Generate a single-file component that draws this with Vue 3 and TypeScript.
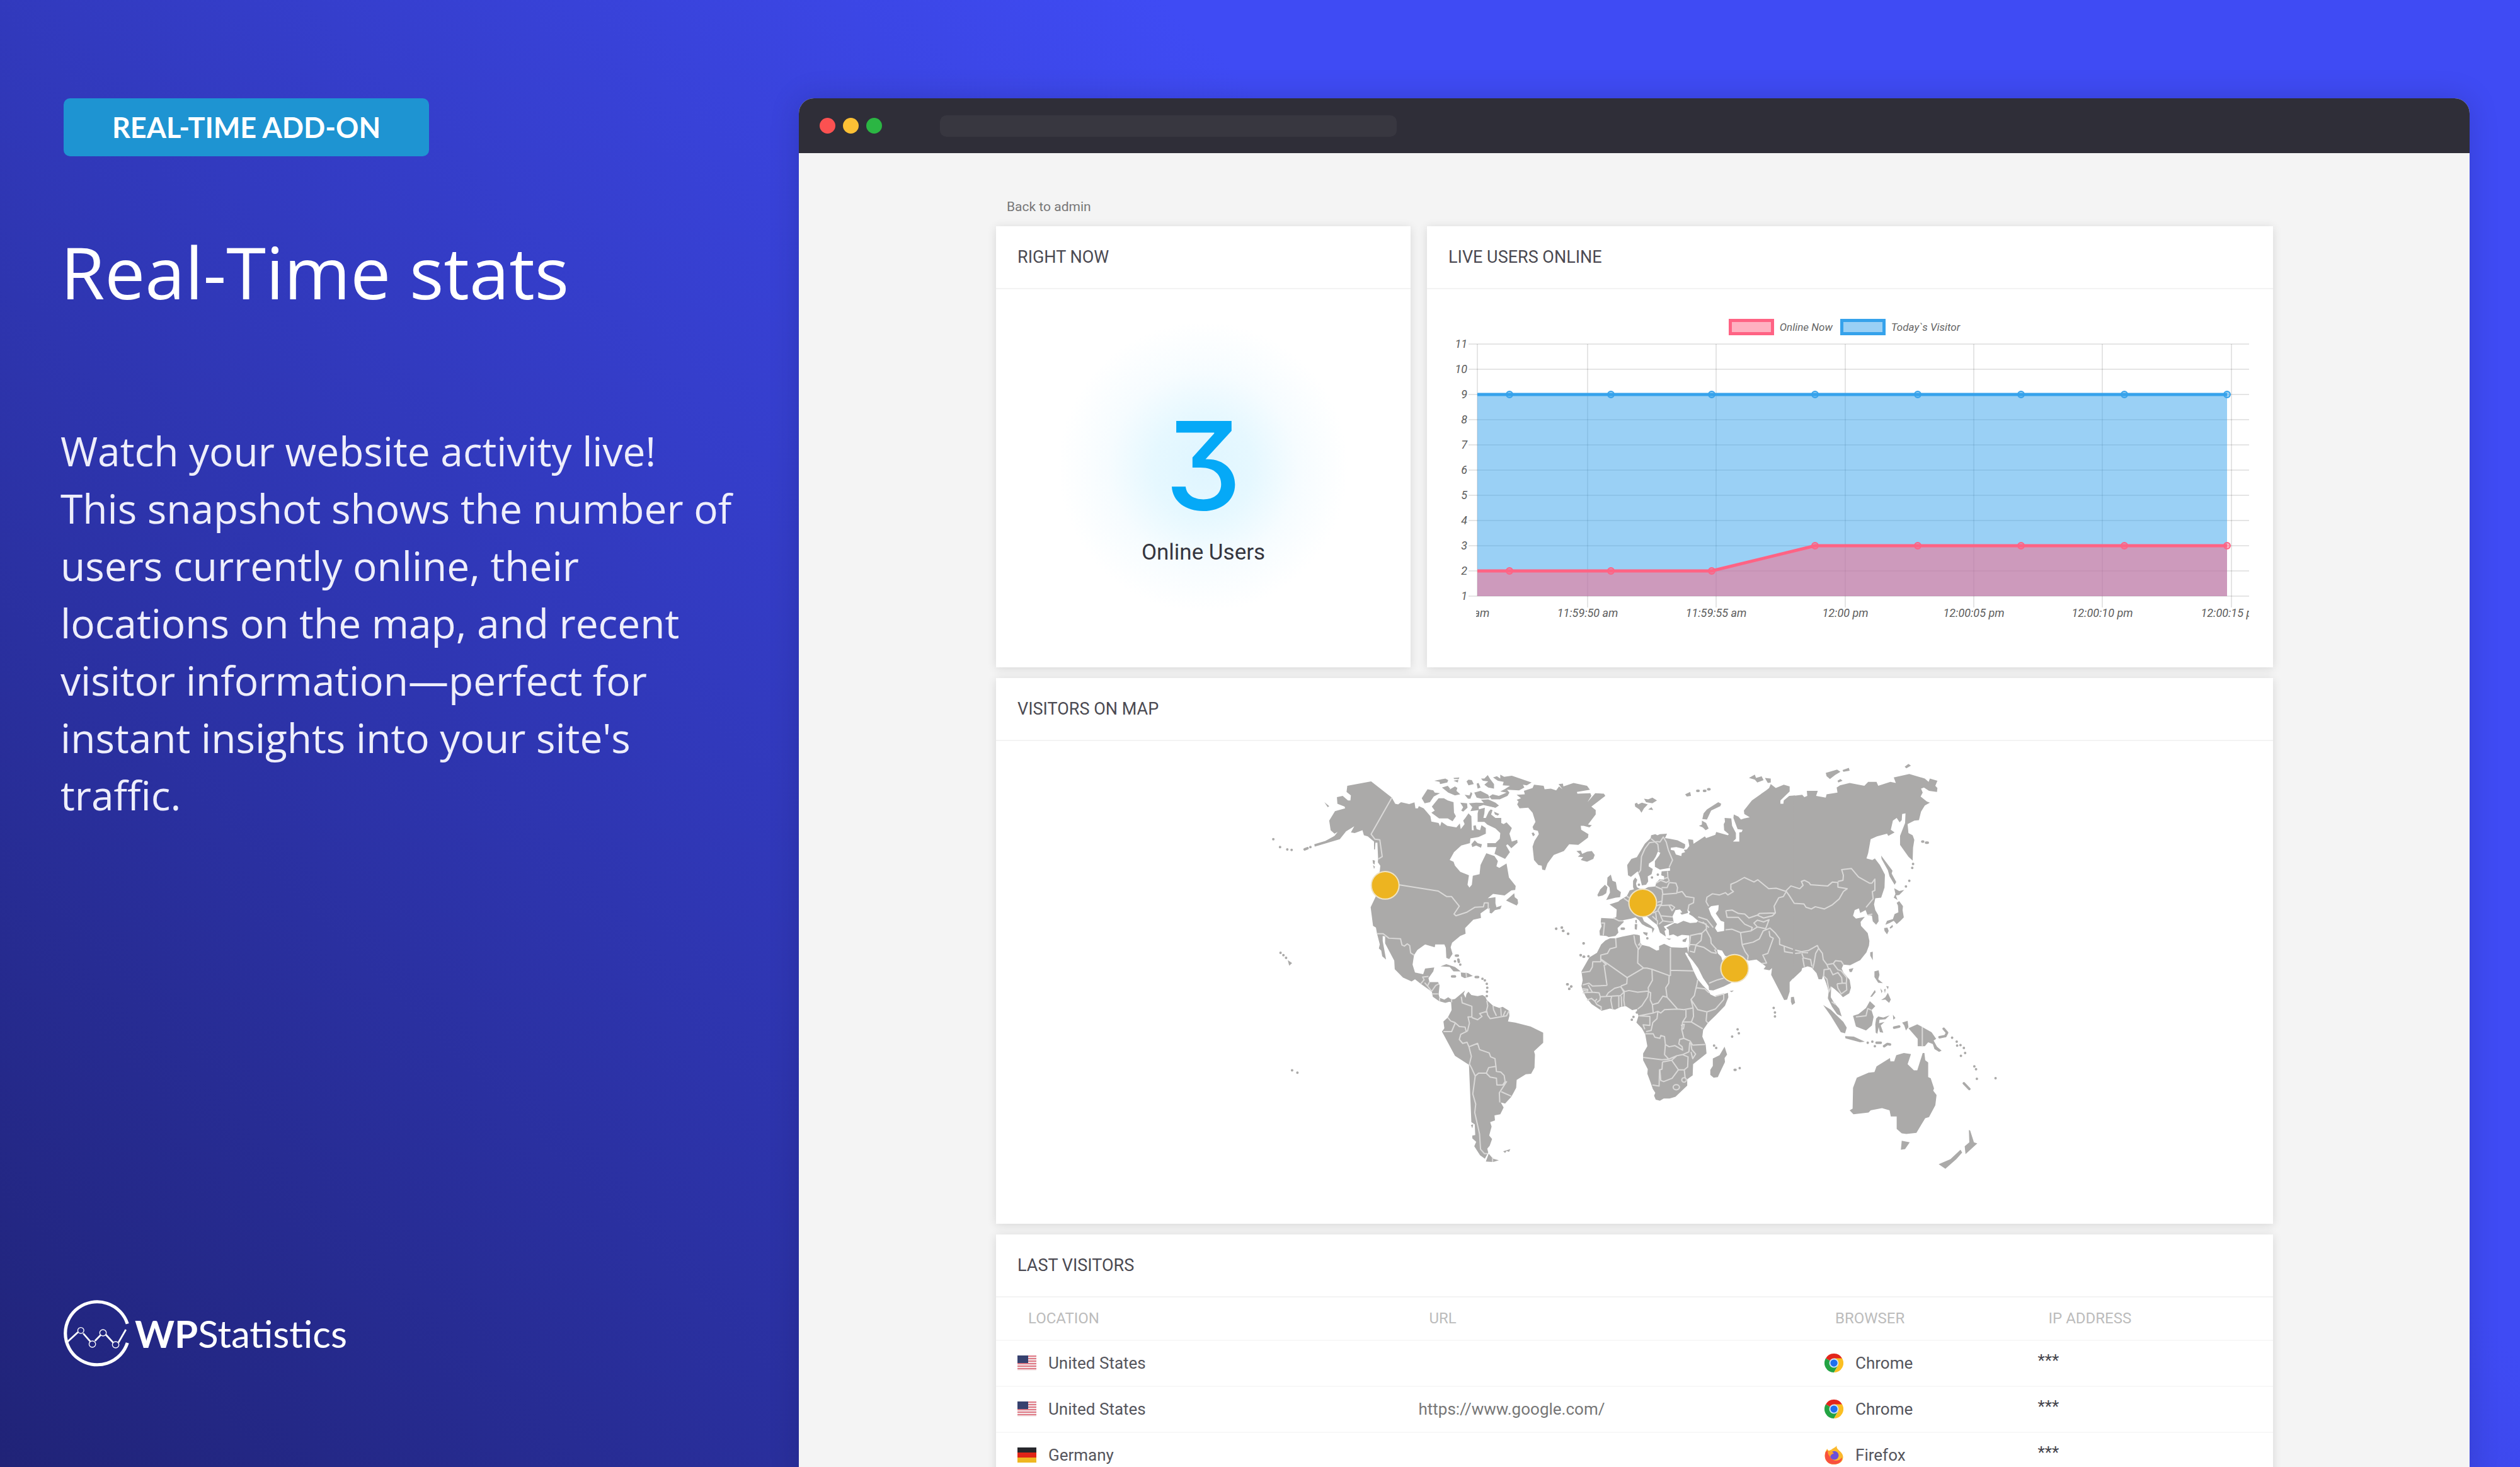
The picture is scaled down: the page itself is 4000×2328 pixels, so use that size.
<script setup lang="ts">
interface Visitor {
  flag: 'us' | 'de'
  country: string
  url: string
  browser: 'Chrome' | 'Firefox'
  ip: string
}

const visitors: Visitor[] = [
  { flag: 'us', country: 'United States', url: '', browser: 'Chrome', ip: '***' },
  { flag: 'us', country: 'United States', url: 'https://www.google.com/', browser: 'Chrome', ip: '***' },
  { flag: 'de', country: 'Germany', url: '', browser: 'Firefox', ip: '***' },
]

/* Live chart, drawn in its own units: 40 per user on the y axis */
const plotLeft = 80
const plotRight = 1305
const plotTop = 14
const plotBottom = 414
const yOf = (n: number): number => plotBottom - (n - 1) * 40
const yTicks: number[] = [11, 10, 9, 8, 7, 6, 5, 4, 3, 2, 1]
const xTicks: { x: number; label: string }[] = [
  { x: 51, label: '11:59:45 am' },
  { x: 255, label: '11:59:50 am' },
  { x: 459, label: '11:59:55 am' },
  { x: 664, label: '12:00 pm' },
  { x: 868, label: '12:00:05 pm' },
  { x: 1072, label: '12:00:10 pm' },
  { x: 1277, label: '12:00:15 pm' },
]
const sampleX: number[] = [131, 292, 452, 616, 779, 943, 1107, 1270]
const today: number[] = [9, 9, 9, 9, 9, 9, 9, 9]
const online: number[] = [2, 2, 2, 3, 3, 3, 3, 3]

const linePath = (values: number[]): string =>
  `M${plotLeft} ${yOf(values[0])}` + values.map((v, i) => `L${sampleX[i]} ${yOf(v)}`).join('')
const areaPath = (values: number[]): string =>
  `${linePath(values)}L${sampleX[sampleX.length - 1]} ${plotBottom}L${plotLeft} ${plotBottom}Z`

const series = [
  { name: 'today', values: today },
  { name: 'online', values: online },
]

/* World map, kept as three sheets */
const americasLand = [
  'M415 148L514 132L600 190L614 212L626 214L638 206L672 213L694 207L698 228L708 228L712 220L732 228L760 256L764 275L794 280L800 292L806 276L830 290L868 296L882 282L886 302L902 284L896 272L905 262L918 246L930 256L932 306L940 306L938 290L948 288L952 302L966 306L972 288L990 298L990 318L960 330L926 335L924 352L888 360L858 384L840 412L856 418L862 432L884 454L920 466L914 500L922 510L932 500L936 468L964 462L968 430L992 388L1026 398L1040 416L1034 434L1046 440L1076 424L1086 474L1114 504L1112 518L1096 520L1068 538L1020 532L998 548L1030 544L1030 566L1034 580L1056 574L1050 586L1028 590L1014 602L1006 600L1006 584L1000 582L968 602L970 618L938 624L904 654L906 674L884 682L850 706L844 722L852 746L838 764L826 760L824 724L818 712L780 712L778 722L738 712L706 732L692 750L686 784L696 812L730 818L738 798L776 794L772 808L752 832L756 846L792 846L798 858L794 890L798 902L818 908L834 900L848 908L862 906L904 876L898 888L906 902L910 888L918 880L930 892L956 896L976 892L988 898L994 910L1020 930L1046 938L1060 934L1086 948L1088 966L1082 986L1112 990L1176 1004L1228 1026L1228 1062L1190 1092L1194 1104L1192 1150L1178 1172L1156 1174L1118 1194L1116 1222L1096 1254L1070 1278L1052 1274L1064 1292L1050 1316L1026 1320L1028 1338L1008 1344L1014 1360L1004 1392L1016 1404L1006 1428L996 1438L1000 1452L986 1474L966 1462L942 1430L950 1414L934 1402L934 1392L946 1390L944 1352L930 1344L920 1140L862 1108L808 1022L818 1010L814 986L832 972L848 946L846 918L838 916L822 920L796 914L770 898L766 880L720 852L696 836L682 844L646 830L612 800L610 770L572 708L572 684L562 682L562 700L576 766L560 754L556 734L546 726L550 712L538 672L534 652L522 646L512 580L534 540L552 490L544 470L550 450L552 432L542 420L543 408L540 350L532 350L530 374L526 374L526 346L500 328L484 324L478 306L446 316L430 314L444 292L410 310L384 338L280 364L278 356L324 344L362 326L375 312L362 318L346 306L340 272L364 238L406 228L404 222L374 212L372 188L396 184L418 200L428 200L430 182L412 170Z',
  'M1002 1456L1020 1474L1044 1480L1020 1486L990 1484Z',
  'M1118 180L1152 178L1148 166L1184 156L1190 144L1230 148L1234 160L1260 158L1282 164L1294 150L1308 160L1292 142L1310 140L1312 150L1354 138L1410 148L1422 162L1368 170L1370 176L1424 174L1428 184L1412 206L1444 174L1480 176L1486 184L1428 222L1446 234L1446 250L1414 286L1430 288L1420 296L1396 290L1384 290L1386 304L1416 320L1414 332L1374 358L1336 356L1314 380L1272 394L1246 424L1236 448L1224 446L1222 432L1208 430L1190 412L1184 364L1192 344L1210 320L1206 308L1188 304L1184 294L1196 276L1184 244L1166 226L1130 228L1120 214L1126 204L1118 198L1136 192Z',
  'M1366 380L1384 378L1390 390L1410 382L1430 380L1442 394L1436 408L1410 418L1384 412L1394 402L1372 400L1382 392Z',
  'M766 222L794 192L816 192L832 200L856 206L858 244L866 256L852 274L832 264L796 264L764 244L778 236Z',
  'M724 192L748 160L772 164L778 172L800 174L774 186L758 206L736 210Z',
  'M956 246L960 232L986 226L984 246L980 262L990 262L1002 240L1010 232L1018 234L1012 250L1030 262L1054 262L1054 280L1064 284L1076 278L1098 298L1088 318L1098 346L1120 340L1122 350L1096 370L1080 356L1074 360L1090 384L1070 408L1026 390L1034 366L996 366L996 352L1030 352L1048 336L1050 316L1030 300L996 286L984 276L956 276Z',
  'M1020 118L1036 114L1050 122L1050 108L1066 116L1098 112L1180 136L1160 146L1144 144L1150 154L1128 164L1078 162L1088 172L1080 184L1048 196L1014 196L1004 186L1018 178L1044 184L1076 172L1050 168L1068 160L1090 148L1060 146L1064 134L1040 130Z',
  'M970 122L984 122L998 110L1008 124L1024 142L1024 158L1000 154L984 144L1000 132L978 130Z',
  'M776 130L822 122L834 128L830 136L800 142L798 134Z',
  'M856 120L880 118L878 124L858 124ZM856 130L876 126L874 136Z',
  'M910 132L918 126L932 128L940 142L918 146Z',
  'M808 154L832 148L842 158L838 162L862 150L872 156L868 166L884 178L862 182L834 172Z',
  'M952 140L960 138L968 154L956 158Z',
  'M902 180L922 182L928 170L934 176L926 194L916 194Z',
  'M942 172L968 166L1000 180L1006 192L972 194L952 190Z',
  'M970 198L1000 196L1030 208L1044 218L1030 226L990 216Z',
  'M884 208L912 210L914 226L896 240L888 236L896 224Z',
  'M920 210L950 208L1030 210L1044 218L1030 226L980 216L960 222L962 234L926 238L934 224Z',
  'M930 356L944 342L956 352L974 356L970 368L950 360L934 366Z',
  'M1024 240L1046 248L1040 254L1028 250Z',
  'M1074 556L1108 530L1110 544L1122 552L1124 566L1118 574Z',
  'M802 790L826 782L862 792L886 808L856 808L840 792Z',
  'M886 812L916 814L936 824L902 832L888 826Z',
  'M1180 316L1188 314L1194 322L1186 328Z',
  'M320 206L340 220L334 224Z',
  'M168 768L186 778L174 788Z',
  'M520 412L530 414L528 428L522 424ZM522 430L530 436L526 444Z',
  'M1062 1448L1092 1440L1086 1450L1076 1446L1070 1454Z',
  'M928 1354L938 1352L934 1366Z',
]
const americasBorders =
  'M600 190L514 320L530 338L550 340L560 400L544 408M546 462L570 480L574 496L628 500L792 522L828 542L848 542L880 576L858 604L866 610L910 598L944 580L980 578L984 564L1000 564L1000 584L1006 586M538 674L564 674L588 690L636 692L642 714L652 718L664 710L674 716L678 742L692 750M720 852L734 838L728 828L752 826M736 848L750 862L766 880M756 846L748 860M796 852L782 858L766 878M766 888L792 888M798 902L798 914M848 906L848 918M888 898L892 920L932 932L932 970L916 970L922 992L914 1020M832 972L844 984L862 990L880 1004L904 1006L908 1020M864 990L848 1022L814 1022M932 972L956 980L974 968L964 958L994 950L998 964L1008 976L1076 966L1086 948M994 912L998 930L992 950M1020 930L1022 944L1034 966M1052 938L1054 966M1072 948L1062 966M914 1020L886 1032L880 1050L894 1064L912 1060L920 1076L956 1064L964 1086L1004 1098L1010 1112L1028 1118L1032 1146L1002 1150L992 1170L960 1170L946 1180L930 1150L922 1138L930 1110L920 1076M992 1170L1008 1184L1034 1188L1036 1212L1060 1212L1070 1200L1066 1178L1052 1166L1034 1164L1032 1146M946 1180L936 1244L948 1280L944 1310L964 1386L968 1440L984 1456L998 1456M1060 1212L1076 1200L1046 1240L1048 1274M1054 1236L1096 1252M908 812L910 830M1018 1470L1018 1486'
const americasDots =
  'M108 338h0M136 366h0M166 374h0M184 376h0M238 374L250 370M262 366h0M138 742h0M150 750h0M161 760h0M186 1160h0M208 1168h0M866 752h8M876 766L878 774M884 784h0M862 772h0M850 826h12M948 828h10M976 834h0M986 840h0M994 852h0M996 866h0M995 880h0M994 896h0M1282 656h0M1306 652h0M1312 664h0M1332 674h0M1396 708h0M1384 750h0M1398 756h0M1416 754h0M1330 854h0M1344 862h0M1336 870h0'

const westLand = [
  'M276 712L296 698L318 690L345 690L378 684L432 676L450 678L460 680L462 706L470 714L506 720L540 734L552 732L552 718L576 710L610 722L664 724L686 722L692 748L680 740L676 744L700 776L716 806L734 834L760 858L788 878L796 890L820 898L880 884L882 900L866 930L822 964L786 990L762 1016L758 1040L774 1068L778 1100L748 1118L714 1138L712 1178L686 1192L686 1214L630 1254L602 1260L574 1260L556 1268L536 1264L528 1250L534 1240L522 1226L512 1204L496 1172L498 1156L476 1124L476 1100L496 1074L486 1032L470 1010L444 990L454 966L446 950L448 942L424 946L394 932L370 934L342 944L318 940L278 948L230 924L204 900L188 874L182 860L188 840L182 808L220 758L256 742Z',
  'M864 1076L876 1104L864 1116L866 1130L838 1174L832 1184L812 1186L796 1176L796 1158L808 1144L808 1118L840 1106Z',
  'M1201 182L1172 184L1146 200L1144 212L1130 212L1130 200L1174 168L1174 150L1146 144L1108 156L1084 142L1076 156L1062 164L994 200L956 236L958 248L984 260L958 264L942 268L930 258L908 250L906 262L926 302L950 304L946 312L934 314L934 346L904 346L918 336L918 316L900 290L896 264L864 262L866 276L860 284L862 306L884 320L880 324L824 312L820 322L776 334L770 328L716 354L714 340L690 338L696 362L684 374L670 376L676 384L660 388L658 398L632 392L624 378L608 376L608 368L634 366L670 372L676 366L676 356L640 342L602 336L580 334L590 318L556 320L544 324L534 320L514 324L512 334L484 354L446 402L420 408L400 430L404 466L418 472L450 452L460 472L470 502L490 500L500 488L498 470L516 462L522 444L502 434L504 424L524 414L536 400L546 382L558 386L552 396L532 416L532 436L556 446L604 440L604 450L564 452L562 466L576 470L576 482L554 480L538 494L534 506L500 508L480 516L458 514L446 508L442 496L448 482L438 474L428 486L428 508L432 516L412 520L398 540L366 554L358 560L316 570L350 588L348 614L334 620L276 618L274 632L278 648L268 664L270 680L300 682L312 686L344 682L358 670L354 654L384 632L380 626L420 620L440 616L456 626L470 640L490 648L518 656L520 672L530 656L510 644L480 630L470 612L490 610L520 630L542 642L548 652L556 670L584 684L578 664L586 660L574 648L600 640L622 634L616 612L630 590L652 588L662 598L652 600L660 606L690 600L686 588L700 596L694 604L712 612L738 628L730 634L700 636L668 628L640 638L626 636L600 646L586 652L598 660L600 680L620 676L640 684L660 678L696 680L694 720L690 750L712 770L738 796L762 832L788 860L790 874L810 876L860 862L892 850L930 830L960 800L940 784L920 772L880 776L856 776L848 756L832 744L828 730L852 734L866 752L900 762L950 762L980 770L1016 766L1060 790L1050 800L1078 804L1090 796L1086 820L1148 910L1162 908L1174 880L1174 846L1201 824Z',
  'M322 464L306 474L304 500L316 510L318 528L300 554L345 546L366 544L370 526L352 516L346 490L330 486Z',
  'M258 536L272 516L294 500L306 508L300 530L284 538L262 542Z',
  'M476 668L498 670L494 682L478 674ZM436 640L448 640L446 660L436 658ZM438 626L446 624L446 636L440 636ZM586 690L610 692L600 696ZM664 696L686 688L678 704L664 702Z',
  'M436 212L446 208L452 214L470 208L498 214L480 228L468 244L458 232L438 222ZM480 194L500 196L520 190L542 200L520 210L490 206ZM500 232L516 224L524 234Z',
  'M758 266L764 246L780 232L834 206L848 212L844 220L800 236L780 268ZM742 290L756 286L756 272L776 280L788 300L774 306L760 296Z',
  'M676 178L700 170L704 184L684 186Z',
  'M980 120L1008 108L1014 120L1040 114L1050 128L1020 136L1008 126ZM1056 120L1084 122L1084 136L1070 138Z',
  'M888 878L908 876L898 882Z',
]
const westBorders =
  'M345 690L348 722L318 728L306 744L274 750L274 774L236 774L234 792L222 808L184 812M274 764L400 830L398 852L370 860M304 858L234 860L218 850L188 856M274 766L300 784L290 786L304 858M432 680L438 708L452 728L450 778L478 796L400 830M462 706L454 714L468 714L454 730M478 796L494 796L516 800L604 824M606 724L606 824M606 804L716 806M518 800L520 840L500 866L502 878M600 824L598 850L584 866L590 900L602 910L640 942M370 864L388 880L408 876L450 882L500 878M386 882L384 910L388 932M372 896L374 934M360 896L360 936M326 896L322 910L330 942M300 896L310 884L340 868L370 862L384 882L368 894L326 896M186 870L212 872L212 878L188 876M188 884L234 882L266 884L272 898L270 910L256 918M234 882L214 856M272 898L326 896M208 910L230 904L246 914L256 926L276 934L276 946M246 914L256 906M502 878L498 898L470 930L450 942M502 880L512 884L510 910L520 926L524 956L456 966M520 926L548 920L570 896L590 900M524 956L546 950L560 956L578 944L640 942M730 860L720 894L704 908L714 938L670 944L640 942M730 866L770 870L790 884M736 838L730 862M704 908L736 944L780 952L820 942L860 908L860 888L820 896M780 952L776 984L786 992M714 938L716 968L706 988L760 1012M680 946L680 970L664 988L706 988M546 952L542 976L522 990L514 1018L490 1022M456 966L508 968L508 1000L476 998L484 1014M486 1030L524 1030L532 1042L556 1046L560 1036L578 1040L582 1068L600 1076L628 1072L664 1088L662 1076L646 1066L650 1050L670 1046L660 1014L664 988M656 1000L672 996L668 1012L658 1014M670 1046L700 1056L712 1070L772 1068M582 1068L578 1104L598 1120L566 1122L476 1114M598 1120L636 1108L664 1104L694 1094L698 1060M702 1058L708 1086L726 1102L712 1118L704 1094M568 1130L566 1156L554 1158L552 1216L520 1212M568 1130L612 1124L644 1158L614 1188L574 1200L560 1196L556 1160M612 1124L636 1108M664 1104L690 1112L688 1148L672 1158L644 1158M672 1158L676 1186M452 460L464 448L468 400L484 372L506 350L544 346M514 336L546 356L550 382M544 346L556 348L572 330L586 348L596 376L616 412L600 438M592 452L594 474L576 478M538 494L560 484L586 492L600 486L594 474M600 492L632 494L640 510L636 530L570 534L566 516L536 506M564 510L590 510L600 492M568 534L566 558L545 562M566 560L562 574L610 572L626 580L614 592L600 574M640 528L662 524L680 542L718 546L716 564L694 572L690 590M276 636L292 636L286 680M334 618L360 628L382 628M384 548L408 560M398 540L408 546M524 600L548 592L560 610L616 614M540 574L562 570L546 590M520 612L540 626L536 600M560 612L570 628L552 640M568 628L604 632L622 632M544 626L544 642M738 630L776 640L778 656L756 672L702 680L696 720M776 660L798 690L800 708L826 730M756 674L752 698L728 714L698 712M730 716L764 722L800 740L826 744M698 736L720 740L728 714M738 614L780 624L810 652M760 632L790 652M816 730L826 742M790 850L830 838L860 832M788 576L776 560L780 544L806 532L840 536L868 528L880 536L906 524L894 516L894 498L920 490L958 474L1004 490L1022 482L1074 514L1110 512L1158 524L1144 542L1122 546L1100 576L1106 600L1030 602L1020 608M870 592L900 590L930 602L960 604L980 618L1020 608L1050 618L1092 610L1106 600M868 660L900 658L940 670L990 664L996 652L960 640L930 616L876 616L870 592M940 670L948 714L962 738L976 752L974 766M950 712L1000 704L1030 692L1048 664L1080 654L1106 672L1126 692L1126 712L1148 718L1200 732M1080 684L1096 690L1070 744L1046 750L1064 778L1040 780M1080 684L1076 664M990 664L1020 650L1004 636L1020 626L1050 632L1076 624L1060 656L1020 650M1148 720L1150 738L1200 744'
const westDots =
  'M62 656h0M88 652h0M94 664h0M118 674h0M192 708h0M178 750h0M192 756h0M114 854h0M134 862h0M124 870h0M734 166h6M766 166h6M786 160h6M456 500h0M518 474h0M546 464h0M374 656h10M496 690h0M446 954h0M430 970h0M422 980h0M926 1014h0M932 1028h0M900 1040h0M814 1072h0M824 1080h0M912 1158h4M936 1152h0'

const eastLand = [
  'M200 184L244 180L254 188L268 184L266 166L318 166L310 184L356 190L360 178L412 172L408 154L424 146L470 138L540 148L558 134L598 134L606 148L664 134L690 138L680 118L754 106L828 122L846 134L852 122L888 130L878 148L888 156L886 170L848 166L824 154L810 158L818 172L808 186L838 204L852 208L828 218L810 240L800 270L778 272L746 284L750 316L770 324L778 340L772 368L770 414L750 400L710 358L710 326L734 280L736 246L720 248L718 270L708 278L694 262L676 272L666 304L684 314L654 326L648 318L600 328L570 338L558 388L550 406L578 412L590 406L614 430L638 464L636 510L620 546L592 548L586 570L592 590L606 608L608 630L596 642L580 630L576 610L554 606L546 590L520 600L514 584L494 590L486 610L500 620L542 614L522 632L524 646L556 672L564 700L562 716L550 740L520 768L472 786L440 784L432 798L440 812L470 838L476 866L468 886L438 900L424 888L400 872L382 862L380 900L396 920L420 940L432 968L410 960L386 934L366 904L370 880L358 850L344 822L338 836L322 836L312 814L288 794L270 790L244 796L240 806L200 834Z',
  'M344 928L380 944L440 988L456 1008L448 1028L428 1024L380 966Z',
  'M448 1038L490 1040L542 1058L520 1060L450 1046Z',
  'M486 966L512 960L548 938L566 914L592 932L574 946L584 970L576 1000L548 1018L500 1004Z',
  'M596 976L606 968L630 972L660 964L640 978L612 980L610 992L636 988L618 1000L630 1026L614 1024L608 1006L602 1030L594 1026L592 996Z',
  'M568 898L590 874L594 882L576 898Z',
  'M588 808L608 804L612 820L606 836L628 850L606 848L588 828Z',
  'M620 910L640 900L652 884L666 908L658 920L640 908Z',
  'M616 868L626 878L622 886ZM634 872L642 870L638 886ZM644 860L656 862L652 872Z',
  'M720 990L746 984L750 1006L738 1018L730 1000Z',
  'M750 1010L792 996L860 1024L882 1048L870 1054L886 1076L908 1090L896 1094L874 1084L866 1066L844 1060L828 1074L794 1074L794 1048Z',
  'M568 740L580 738L580 768L568 752ZM466 800L488 796L480 810L470 810Z',
  'M190 900L204 898L210 920L196 928L190 916Z',
  'M620 396L674 450L670 460L692 490L684 500L660 470L652 448L622 408Z',
  'M682 512L706 522L730 518L706 536L690 538L698 554L680 546L688 532Z',
  'M694 564L706 558L724 576L722 590L728 616L712 628L694 640L680 628L660 636L640 642L648 628L676 622L684 604L702 598L700 574Z',
  'M634 654L650 652L656 664L648 676L636 664ZM660 652L674 642L676 650L664 656Z',
  'M732 80L750 70L762 76L740 86Z',
  'M356 102L410 90L426 98L400 110L376 124L360 114ZM436 92L466 84L470 94L440 98ZM412 130L426 124L436 130L416 136Z',
  'M470 1302L484 1296L486 1222L504 1186L560 1168L588 1166L598 1146L662 1116L664 1128L682 1128L692 1106L728 1098L762 1102L746 1138L776 1160L792 1160L818 1098L826 1098L830 1124L844 1132L844 1184L856 1188L872 1224L868 1232L884 1248L878 1284L848 1326L830 1330L788 1382L740 1386L718 1384L694 1368L694 1324L666 1324L660 1302L624 1294L570 1302L560 1310L488 1316Z',
  'M718 1410L756 1416L734 1440L714 1442Z',
  'M1038 1372L1044 1374L1062 1416L1078 1420L1022 1458L1018 1430L1040 1416Z',
  'M894 1494L950 1476L998 1442L1006 1452L978 1476L926 1510Z',
  'M676 962L688 974L678 980Z',
]
const eastBorders =
  'M166 522L190 504L232 514L248 502L240 488L254 484L276 492L284 500L366 504L388 490L414 492L414 508L458 514L440 524L420 550L386 572L350 586L306 578L288 586L262 580L252 568L206 566L180 536L166 522M414 488L438 484L440 466L432 446L478 442L512 472L564 494L576 494L590 480L590 520L578 524L582 550L548 580M556 608L578 604M210 732L240 738L272 734L316 716L322 726L340 744L344 766L362 784L392 780L402 770L430 772L440 784M210 744L238 742M240 740L272 742M242 744L250 760L284 766L290 790M246 760L254 792M322 726L308 744L300 780L294 798M362 784L370 800L348 802L346 824L362 836L372 880L382 862M374 796L390 820L414 812L432 830L434 850L454 850L456 830L430 806L414 802L392 780M410 852L436 850M410 852L414 868L430 888L456 874L454 850M384 916L404 926M500 970L548 966L556 940L574 946M816 1006L816 1074'
const eastDots =
  'M926 1038L934 1026L918 1012M898 1042L926 1038M958 1044h0M980 1058h0M982 1072h0M998 1070h0M1014 1080h0M1020 1098h0M1000 1108h0M1064 1146h0M1072 1156h0M1076 1190h0M1165 1188h0M1014 1206L1040 1226M556 1062h0M578 1058h0M598 1062h20M590 1074h0M634 1074L650 1066L662 1068M682 1008L706 1004M738 506h0M754 486h0M768 440h0M772 426h0M816 346h4M834 350h8M108 938h0M114 954h0M114 968h0'

const pins = [
  { name: 'United States', x: 2199, y: 1404 },
  { name: 'Germany', x: 2608, y: 1432 },
  { name: 'Oman', x: 2754, y: 1536 },
]
</script>

<template>
  <div class="page">
    <section class="intro">
      <span class="badge">REAL-TIME ADD-ON</span>
      <h1>Real-Time stats</h1>
      <p>
        Watch your website activity live! This snapshot shows the number of users currently online,
        their locations on the map, and recent visitor information—perfect for instant insights into
        your site's traffic.
      </p>
      <div class="brand">
        <svg viewBox="118 120 304 324" preserveAspectRatio="none" fill="none" stroke="#fff" aria-hidden="true">
          <path d="M411 236A146 150 0 1 0 411 327" stroke-width="15" />
          <path d="M136 322L184 276M208 282L240 320M262 318L288 290M312 288L345 325M370 325L404 264" stroke-width="8" />
          <g stroke-width="4">
            <circle cx="197" cy="268" r="14" />
            <circle cx="250" cy="333" r="15" />
            <circle cx="299" cy="279" r="15" />
            <circle cx="357" cy="336" r="15" />
          </g>
        </svg>
        <span><b>WP</b>Statistics</span>
      </div>
    </section>

    <main class="window">
      <header class="titlebar">
        <i class="dot red"></i><i class="dot yellow"></i><i class="dot green"></i>
        <input class="address" type="text" aria-label="Address" />
      </header>

      <div class="dashboard">
        <a class="back" href="#">Back to admin</a>

        <div class="top-row">
          <article class="card">
            <h2>RIGHT NOW</h2>
            <div class="now">
              <strong>3</strong>
              <span>Online Users</span>
            </div>
          </article>

          <article class="card">
            <h2>LIVE USERS ONLINE</h2>
            <div class="legend">
              <span class="key"><i class="swatch online"></i>Online Now</span>
              <span class="key"><i class="swatch today"></i>Today`s Visitor</span>
            </div>
            <svg class="chart" viewBox="0 0 1343 527" role="img" aria-label="Live users online">
              <defs>
                <clipPath id="axis-clip"><rect :x="plotLeft - 2" y="414" :width="plotRight - plotLeft + 2" height="60" /></clipPath>
              </defs>
              <g class="grid">
                <line v-for="n in yTicks" :key="n" :x1="plotLeft - 14" :x2="plotRight" :y1="yOf(n)" :y2="yOf(n)" />
                <line :x1="plotLeft" :x2="plotLeft" :y1="plotTop" :y2="plotBottom" />
                <line v-for="t in xTicks.slice(1)" :key="t.x" :x1="t.x" :x2="t.x" :y1="plotTop" :y2="432" />
              </g>
              <g v-for="s in series" :key="s.name" :class="['series', s.name]">
                <path class="area" :d="areaPath(s.values)" />
                <path class="line" :d="linePath(s.values)" />
                <circle v-for="(v, i) in s.values" :key="i" :cx="sampleX[i]" :cy="yOf(v)" r="5" />
              </g>
              <g class="ticks" text-anchor="end">
                <text v-for="n in yTicks" :key="n" :x="plotLeft - 16" :y="yOf(n) + 6">{{ n }}</text>
              </g>
              <g class="ticks" text-anchor="middle" clip-path="url(#axis-clip)">
                <text v-for="t in xTicks" :key="t.x" :x="t.x" y="447">{{ t.label }}</text>
              </g>
            </svg>
          </article>
        </div>

        <article class="card">
          <h2>VISITORS ON MAP</h2>
          <svg class="map" viewBox="1581 1175 2028 766" role="img" aria-label="Visitors on map">
            <svg x="1980" y="1180" width="600" height="700" viewBox="0 0 1568 1568" preserveAspectRatio="none">
              <path v-for="(d, i) in americasLand" :key="i" class="land" :d="d" />
              <path class="border" :d="americasBorders" />
              <path class="dots" :d="americasDots" />
            </svg>
            <svg x="2450" y="1180" width="400" height="700" viewBox="0 0 1200 1568" preserveAspectRatio="none">
              <path v-for="(d, i) in westLand" :key="i" class="land" :d="d" />
              <path class="water" d="M788 584L800 576L836 572L834 590L822 602L846 628L862 632L862 664L830 668L818 654L828 640L800 608Z" />
              <path class="border" :d="westBorders" />
              <ellipse class="border" cx="634" cy="1220" rx="15" ry="9" />
              <ellipse class="border" cx="671" cy="1194" rx="11" ry="8" />
              <path class="dots" :d="westDots" />
            </svg>
            <svg x="2780" y="1180" width="420" height="700" viewBox="0 0 1260 1568" preserveAspectRatio="none">
              <path v-for="(d, i) in eastLand" :key="i" class="land" :d="d" />
              <path class="border" :d="eastBorders" />
              <path class="dots" :d="eastDots" />
            </svg>
            <circle v-for="p in pins" :key="p.name" class="pin" :cx="p.x" :cy="p.y" r="22" />
          </svg>
        </article>

        <article class="card">
          <h2>LAST VISITORS</h2>
          <table>
            <colgroup>
              <col class="c-location" />
              <col class="c-url" />
              <col class="c-browser" />
              <col />
            </colgroup>
            <thead>
              <tr>
                <th scope="col">LOCATION</th>
                <th scope="col">URL</th>
                <th scope="col">BROWSER</th>
                <th scope="col">IP ADDRESS</th>
              </tr>
            </thead>
            <tbody>
              <tr v-for="(v, i) in visitors" :key="i">
                <td>
                  <div class="cell">
                    <svg v-if="v.flag === 'us'" class="flag" viewBox="0 0 30 24" aria-hidden="true">
                      <rect width="30" height="24" fill="#f3e6e8" />
                      <path d="M0 1h30M0 5h30M0 9h30M0 13h30M0 17h30M0 21h30" stroke="#df7a86" stroke-width="2" />
                      <rect width="17" height="12" fill="#36416f" />
                    </svg>
                    <svg v-else class="flag" viewBox="0 0 30 24" aria-hidden="true">
                      <rect width="30" height="8" fill="#26272c" />
                      <rect y="8" width="30" height="8" fill="#e02418" />
                      <rect y="16" width="30" height="8" fill="#efb621" />
                    </svg>
                    {{ v.country }}
                  </div>
                </td>
                <td class="url"><a v-if="v.url" :href="v.url">{{ v.url }}</a></td>
                <td>
                  <div class="cell">
                    <svg v-if="v.browser === 'Chrome'" class="browser" viewBox="0 0 48 48" aria-hidden="true">
                      <path d="M24 24L3.200 12A24 24 0 0 1 44.800 12Z" fill="#e3261c" />
                      <path d="M24 24L3.200 12A24 24 0 0 0 24 48L34.400 30Z" fill="#23a343" />
                      <path d="M24 12H44.800A24 24 0 0 1 24 48L34.400 30Z" fill="#fbbf22" />
                      <circle cx="24" cy="24" r="12" fill="#cfe4f8" />
                      <circle cx="24" cy="24" r="9" fill="#1f6fee" />
                    </svg>
                    <svg v-else class="browser" viewBox="0 0 48 48" aria-hidden="true">
                      <path d="M31 0C30 6 33 9 38 13C47 20 49 28 46 36C42 45 33 48 24 48C9 48 0 38 1 24C1 18 3 14 7 8C8 11 9 12 11 13L18 10C22 6 27 6 31 0Z" fill="#fbb92c" />
                      <path d="M3 16C0 24 0 34 7 41C14 49 33 50 41 41C44 38 45 34 44 30C40 37 30 40 24 37C16 34 11 26 12 19L8 12Z" fill="#f8503f" />
                      <circle cx="25" cy="25" r="11" fill="#6a4fd8" />
                      <path d="M8 14C14 12 20 15 24 20C20 21 16 23 15 28C10 25 8 20 8 14Z" fill="#fca22c" />
                    </svg>
                    {{ v.browser }}
                  </div>
                </td>
                <td class="ip">{{ v.ip }}</td>
              </tr>
            </tbody>
          </table>
        </article>
      </div>
    </main>
  </div>
</template>

<style>
body {
  margin: 0;
}
</style>

<style scoped>
.page {
  display: grid;
  grid-template-columns: 31.7vw minmax(0, 1fr);
  height: 100vh;
  overflow: hidden;
  box-sizing: border-box;
  padding: 156px 80px 0 0;
  background: linear-gradient(45deg, #202377 0%, #3f4bf4 66%);
  font-family: Roboto, 'Liberation Sans', sans-serif;
}

/* Left column */
.intro {
  display: flex;
  flex-direction: column;
  align-items: flex-start;
  box-sizing: border-box;
  padding: 0 96px 158px 96px;
  height: calc(100vh - 156px);
  color: #fff;
}
.badge,
.brand {
  margin-left: 5px;
}
.badge {
  box-sizing: border-box;
  width: 580px;
  height: 92px;
  border-radius: 10px;
  background: #1e94d2;
  font: 700 45px/92px Lato, 'Open Sans', sans-serif;
  text-align: center;
}
h1 {
  margin: 118px 0 174px;
  font: 500 114px/130px 'Open Sans', Lato, sans-serif;
}
p {
  margin: 0;
  color: #eeeefb;
  font: 400 64px/91px 'Open Sans', 'Noto Sans', sans-serif;
}
.brand {
  display: flex;
  align-items: center;
  gap: 8px;
  margin-top: auto;
  font: 400 60px/106px Lato, 'Open Sans', sans-serif;
}
.brand b {
  font-weight: 700;
}
.brand svg {
  width: 105px;
  height: 108px;
}

/* Browser window */
.window {
  align-self: start;
  min-width: 0;
  border-radius: 24px 24px 0 0;
  background: #f4f4f4;
  box-shadow: 0 0 48px rgba(0, 0, 40, 0.16);
  overflow: hidden;
}
.titlebar {
  display: flex;
  align-items: center;
  gap: 12px;
  height: 87px;
  padding-left: 33px;
  background: #2f2e38;
}
.dot {
  width: 25px;
  height: 25px;
  border-radius: 50%;
}
.red {
  background: #fb5151;
}
.yellow {
  background: #fcc035;
}
.green {
  background: #2bb643;
}
.address {
  box-sizing: border-box;
  width: 725px;
  height: 34px;
  margin-left: 80px;
  border: 0;
  border-radius: 10px;
  background: #383740;
}
.dashboard {
  display: flex;
  flex-direction: column;
  gap: 17px;
  padding: 71px 312px 0 313px;
}
.back {
  align-self: flex-start;
  padding-left: 17px;
  color: #777;
  font-size: 21px;
  line-height: 28px;
  text-decoration: none;
}
.top-row {
  display: grid;
  grid-template-columns: 658fr 1343fr;
  gap: 26px;
}
.card {
  min-width: 0;
  background: #fff;
  box-shadow: 0 2px 14px rgba(0, 0, 0, 0.12);
}
h2 {
  margin: 0;
  padding: 0 34px;
  border-bottom: 2px solid #f3f3f3;
  color: #4b4a52;
  font-size: 27px;
  font-weight: 400;
  line-height: 98px;
}

/* Right now */
.now {
  display: flex;
  flex-direction: column;
  align-items: center;
  box-sizing: border-box;
  height: 600px;
  padding-top: 162px;
  background: radial-gradient(circle at 50% 47%, #dff5ff 0, #e6f8ff 80px, #f6fcff 150px, #fff 230px);
}
.now strong {
  color: #05a9f7;
  font: 500 194px/236px Inter, sans-serif;
  font-feature-settings: 'cv09';
}
.now span {
  color: #35363f;
  font-size: 35px;
  line-height: 40px;
}

/* Live chart */
.legend {
  display: flex;
  align-items: center;
  justify-content: center;
  gap: 12px;
  height: 26px;
  padding-top: 47px;
  padding-right: 18px;
}
.key {
  display: flex;
  align-items: center;
  gap: 9px;
  color: #666;
  font: italic 17px/26px Roboto, 'Liberation Sans', sans-serif;
}
.swatch {
  box-sizing: border-box;
  width: 72px;
  height: 26px;
  border: 5px solid;
}
.swatch.online {
  border-color: #ff6384;
  background: #ffb1c1;
}
.swatch.today {
  border-color: #36a2eb;
  background: #9ad0f5;
}
.chart {
  display: block;
  width: 100%;
}
.grid line {
  stroke: rgba(0, 0, 0, 0.1);
  stroke-width: 2;
}
.series .line {
  fill: none;
  stroke-width: 5;
}
.series circle {
  stroke-width: 2;
}
.series.today .area,
.series.today circle {
  fill: rgba(54, 162, 235, 0.5);
}
.series.today .line,
.series.today circle {
  stroke: #36a2eb;
}
.series.online .area,
.series.online circle {
  fill: rgba(255, 99, 132, 0.5);
}
.series.online .line,
.series.online circle {
  stroke: #ff6384;
}
.ticks {
  fill: #5c5c5c;
  font: italic 18px Roboto, 'Liberation Sans', sans-serif;
}

/* Map */
.map {
  display: block;
  width: 100%;
}
.land {
  fill: #abaaa9;
}
.water {
  fill: #fff;
}
.border {
  fill: none;
  stroke: #dad9d8;
  stroke-width: 2px;
  stroke-linejoin: round;
  vector-effect: non-scaling-stroke;
}
.dots {
  fill: none;
  stroke: #abaaa9;
  stroke-width: 4px;
  stroke-linecap: round;
  stroke-linejoin: round;
  vector-effect: non-scaling-stroke;
}
.pin {
  fill: #edb420;
  stroke: #efe3c4;
  stroke-width: 2;
}

/* Last visitors */
table {
  width: 100%;
  border-collapse: collapse;
  table-layout: fixed;
  color: #55555c;
  font-size: 26px;
}
.c-location {
  width: 31.4%;
}
.c-url {
  width: 31.8%;
}
.c-browser {
  width: 16.7%;
}
th,
td {
  box-sizing: border-box;
  border-bottom: 2px solid #f8f8f8;
}
th {
  height: 68px;
  padding: 0 0 0 51px;
  color: #bcbcbc;
  font-size: 24px;
  font-weight: 400;
  text-align: left;
}
td {
  height: 73px;
  padding: 0 0 0 34px;
}
.cell {
  display: flex;
  align-items: center;
  gap: 19px;
}
.flag {
  width: 30px;
  height: 24px;
}
.browser {
  width: 30px;
  height: 30px;
}
.url a {
  color: #777;
  text-decoration: none;
}
td.ip {
  padding-bottom: 8px;
  color: #44444c;
}
</style>
